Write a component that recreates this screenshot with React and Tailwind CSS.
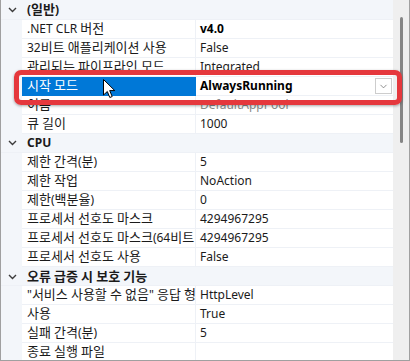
import { ChevronDown } from "lucide-react";

const groups = [
  {
    title: "(일반)",
    rows: [
      { name: ".NET CLR 버전", value: "v4.0", bold: true },
      { name: "32비트 애플리케이션 사용", value: "False" },
      { name: "관리되는 파이프라인 모드", value: "Integrated" },
      { name: "시작 모드", value: "AlwaysRunning", bold: true, selected: true },
      { name: "이름", value: "DefaultAppPool", readonly: true },
      { name: "큐 길이", value: "1000" },
    ],
  },
  {
    title: "CPU",
    rows: [
      { name: "제한 간격(분)", value: "5" },
      { name: "제한 작업", value: "NoAction" },
      { name: "제한(백분율)", value: "0" },
      { name: "프로세서 선호도 마스크", value: "4294967295" },
      { name: "프로세서 선호도 마스크(64비트 옵션)", value: "4294967295" },
      { name: "프로세서 선호도 사용", value: "False" },
    ],
  },
  {
    title: "오류 급증 시 보호 기능",
    rows: [
      { name: "\"서비스 사용할 수 없음\" 응답 형식", value: "HttpLevel" },
      { name: "사용", value: "True" },
      { name: "실패 간격(분)", value: "5" },
      { name: "종료 실행 파일", value: "" },
    ],
  },
];

// Hangul in the CJK font runs a bit narrow next to the Windows original,
// so Hangul runs get a slightly bigger size than the Latin parts.
function Label({ text }) {
  return (
    <span className="whitespace-pre">
      {text.split(/([\uAC00-\uD7A3]+)/).map((part, i) =>
        /[\uAC00-\uD7A3]/.test(part) ? (
          <span key={i} className="text-[13px]">
            {part}
          </span>
        ) : (
          part
        )
      )}
    </span>
  );
}

function Chevron() {
  return (
    <svg width="9" height="6" viewBox="0 0 9 6" className="text-[#3c3c3c]">
      <path d="M1 1 L4.5 4.5 L8 1" fill="none" stroke="currentColor" strokeWidth="1.4" />
    </svg>
  );
}

function CategoryRow({ title, first }) {
  return (
    <div
      className={`grid grid-cols-[21px_1fr] bg-[#f3f6fa] border-b border-[#eef1f6] ${
        first ? "h-[20px]" : "h-[19px]"
      }`}
    >
      <div className="flex items-center justify-center pl-[1px]">
        <Chevron />
      </div>
      <div className="flex items-center pl-[5px] font-bold text-[#1b1b1b]">
        <Label text={title} />
      </div>
    </div>
  );
}

function PropRow({ row }) {
  return (
    <div className="grid grid-cols-[21px_174px_1fr] h-[19px]">
      <div className="bg-[#f3f6fa]" />
      <div
        className={`flex items-center pl-[5px] overflow-hidden border-b border-r ${
          row.selected
            ? "bg-[#0078d7] text-white border-[#0078d7]"
            : "bg-white border-[#eef1f6] text-[#1b1b1b]"
        }`}
      >
        <Label text={row.name} />
      </div>
      <div className="flex items-center justify-between pl-[4px] bg-white border-b border-[#eef1f6] overflow-hidden whitespace-nowrap">
        <span
          className={`${row.bold ? "font-bold text-black" : ""} ${
            row.readonly ? "text-[#8a8a8a]" : "text-[#1b1b1b]"
          }`}
        >
          {row.value}
        </span>
        {row.selected && (
          <div className="w-[17px] h-[16px] border border-[#cdcdcd] flex items-center justify-center mr-[1px]">
            <ChevronDown size={11} strokeWidth={1.5} className="text-[#606060]" />
          </div>
        )}
      </div>
    </div>
  );
}

export default function App() {
  return (
    <div className="relative w-[410px] h-[361px] bg-white border-l border-r border-b border-[#a0a0a0] overflow-hidden flex text-[12px] font-['Noto_Sans','Noto_Sans_CJK_KR',sans-serif]">
      <div className="flex-1 flex flex-col">
        {groups.map((g, gi) => (
          <div key={g.title}>
            <CategoryRow title={g.title} first={gi === 0} />
            {g.rows.map((r) => (
              <PropRow key={r.name} row={r} />
            ))}
          </div>
        ))}
      </div>

      <div className="w-[16px] bg-[#efefef] pt-[17px] pl-[7px]">
        <div className="w-[3px] h-[126px] rounded-full bg-[#858585]" />
      </div>

      {/* highlight box drawn over the selected row */}
      <div className="absolute left-[13px] top-[70px] w-[388px] h-[35px] rounded-[7px] border-[5px] border-[#e5383d] shadow-[0_1px_3px_rgba(0,0,0,0.35)]" />

      {/* mouse pointer */}
      <svg className="absolute left-[102px] top-[79px]" width="13" height="20" viewBox="0 0 13 20">
        <path
          d="M0.5 0.5 L0.5 16 L4.3 12.5 L6.8 18.5 L9.2 17.5 L6.7 11.6 L11.8 11.6 Z"
          fill="white"
          stroke="black"
          strokeWidth="1"
          strokeLinejoin="round"
        />
      </svg>
    </div>
  );
}
